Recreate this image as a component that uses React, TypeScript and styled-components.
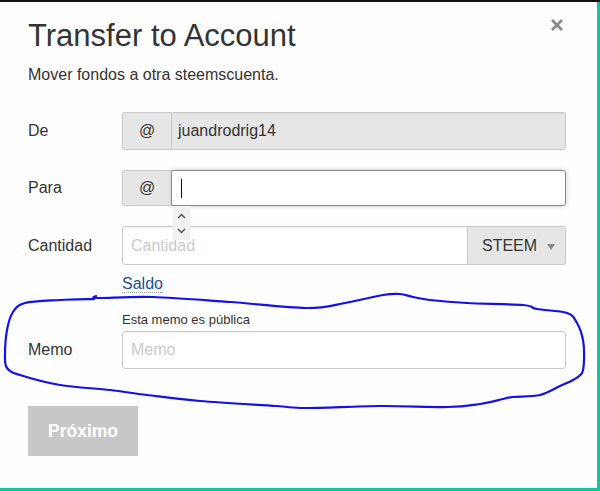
import React from "react";
import styled, { createGlobalStyle } from "styled-components";

const GlobalStyle = createGlobalStyle`
  html, body {
    margin: 0;
    padding: 0;
    background: #17c29d;
  }
  body {
    font-family: "Liberation Sans", Arial, Helvetica, sans-serif;
    color: #333;
  }
`;

const Frame = styled.div`
  position: relative;
  width: 600px;
  height: 491px;
  background: #17c29d;
  overflow: hidden;
`;

const TopRule = styled.div`
  height: 2px;
  background: #111;
`;

const Modal = styled.div`
  position: relative;
  width: 597px;
  height: 486px;
  box-sizing: border-box;
  padding: 16px 31px 0 28px;
  background: #fefefe;
`;

const Title = styled.h2`
  margin: 0;
  font-size: 31px;
  line-height: 36px;
  font-weight: 400;
  color: #333;
`;

const Subtitle = styled.p`
  margin: 11px 0 0;
  font-size: 16px;
  line-height: 20px;
  color: #333;
`;

const CloseButton = styled.button`
  position: absolute;
  top: 16px;
  right: 33px;
  width: 14px;
  height: 14px;
  padding: 0;
  border: 0;
  background: transparent;
  display: flex;
`;

const Form = styled.div`
  margin-top: 27px;
  display: flex;
  flex-direction: column;
`;

const Row = styled.div<{ $top?: number; $align?: string }>`
  display: grid;
  grid-template-columns: 94px 1fr;
  align-items: ${(p) => p.$align ?? "end"};
  margin-top: ${(p) => p.$top ?? 0}px;
`;

const Label = styled.div<{ $h: number }>`
  font-size: 16px;
  line-height: ${(p) => p.$h}px;
  color: #333;
`;

const Field = styled.div`
  display: flex;
  flex-direction: column;
`;

const Group = styled.div<{ $h: number }>`
  position: relative;
  display: flex;
  height: ${(p) => p.$h}px;
`;

const Prefix = styled.div`
  width: 49px;
  box-sizing: border-box;
  display: flex;
  align-items: center;
  justify-content: center;
  background: #e6e6e6;
  border: 1px solid #cacaca;
  border-right: 0;
  border-radius: 3px 0 0 3px;
  font-size: 16px;
  color: #333;
`;

const Input = styled.div<{ $disabled?: boolean; $focus?: boolean; $round?: string }>`
  flex: 1;
  box-sizing: border-box;
  display: flex;
  align-items: center;
  padding-left: ${(p) => (p.$disabled ? 6 : 8)}px;
  background: ${(p) => (p.$disabled ? "#e6e6e6" : "#fff")};
  border: 1px solid ${(p) => (p.$focus ? "#8a8a8a" : "#cacaca")};
  border-radius: ${(p) => p.$round ?? "0 3px 3px 0"};
  box-shadow: ${(p) => (p.$focus ? "0 0 5px #cacaca" : "inset 0 1px 2px rgba(10,10,10,0.06)")};
  font-size: 16px;
  color: #333;
`;

const Placeholder = styled.span`
  color: #cacaca;
`;

const Caret = styled.span`
  display: block;
  width: 1px;
  height: 19px;
  margin-left: 1px;
  background: #111;
`;

const Select = styled.div`
  width: 98px;
  box-sizing: border-box;
  display: flex;
  align-items: center;
  justify-content: space-between;
  padding: 0 10px 0 14px;
  background: #e6e6e6;
  border: 1px solid #cacaca;
  border-left: 0;
  border-radius: 0 3px 3px 0;
  font-size: 16px;
  color: #333;
`;

const Arrow = styled.span`
  width: 0;
  height: 0;
  border-left: 4px solid transparent;
  border-right: 4px solid transparent;
  border-top: 6px solid #8a8a8a;
  margin-top: 2px;
`;

const Spinner = styled.div`
  position: absolute;
  z-index: 2;
  left: 51px;
  top: 100%;
  width: 17px;
  height: 34px;
  background: #f1f1f1;
  display: flex;
  flex-direction: column;
  align-items: center;
  justify-content: space-around;
  padding: 2px 0;
  box-sizing: border-box;
`;

const Balance = styled.div`
  margin-top: 9px;
  font-size: 16px;
  line-height: 20px;
`;

const Link = styled.a`
  color: #1a4f95;
  text-decoration: none;
  border-bottom: 1px dotted #9a9a9a;
`;

const Hint = styled.div`
  margin-top: 18px;
  margin-bottom: 3px;
  font-size: 13px;
  line-height: 16px;
  color: #333;
`;

const Submit = styled.button`
  margin-top: 37px;
  width: 110px;
  height: 50px;
  border: 0;
  background: #c6c7c9;
  color: #fff;
  font-family: "Liberation Sans", Arial, sans-serif;
  font-size: 17.5px;
  font-weight: 700;
  padding: 0;
`;

const Annotation = styled.svg`
  position: absolute;
  left: 0;
  top: 0;
  z-index: 3;
  pointer-events: none;
`;

const loop: [number, number][] = [
  [94, 299], [96, 296], [98, 298], [153, 297], [230, 302], [306, 308], [345, 303],
  [383, 295], [400, 294], [413, 297], [430, 300], [467, 303], [523, 305],
  [537, 309], [567, 313], [577, 323], [583, 340], [584, 360], [582, 373],
  [573, 380], [560, 386], [540, 395], [513, 397], [503, 399], [480, 404],
  [447, 407], [380, 406], [306, 408], [276, 406], [200, 401], [147, 395],
  [110, 390], [60, 385], [20, 375], [7, 368], [5, 355], [7, 330], [13, 312],
  [25, 303], [60, 300], [94, 299],
];

function smoothPath(pts: [number, number][]) {
  let d = `M ${pts[0][0]} ${pts[0][1]}`;
  for (let i = 0; i < pts.length - 1; i++) {
    const p0 = pts[i - 1] ?? pts[i];
    const p1 = pts[i];
    const p2 = pts[i + 1];
    const p3 = pts[i + 2] ?? p2;
    const c1x = p1[0] + (p2[0] - p0[0]) / 6;
    const c1y = p1[1] + (p2[1] - p0[1]) / 6;
    const c2x = p2[0] - (p3[0] - p1[0]) / 6;
    const c2y = p2[1] - (p3[1] - p1[1]) / 6;
    d += ` C ${c1x.toFixed(1)} ${c1y.toFixed(1)} ${c2x.toFixed(1)} ${c2y.toFixed(1)} ${p2[0]} ${p2[1]}`;
  }
  return d;
}

export default function App() {
  return (
    <>
      <GlobalStyle />
      <Frame>
        <TopRule />
        <Modal>
          <Title>Transfer to Account</Title>
          <Subtitle>Mover fondos a otra steemscuenta.</Subtitle>
          <CloseButton aria-label="close">
            <svg width="14" height="14" viewBox="0 0 14 14">
              <path d="M2 2 L12 12 M12 2 L2 12" stroke="#8a8a8a" strokeWidth="2.8" />
            </svg>
          </CloseButton>

          <Form>
            <Row>
              <Label $h={38}>De</Label>
              <Group $h={38}>
                <Prefix>@</Prefix>
                <Input $disabled>juandrodrig14</Input>
              </Group>
            </Row>

            <Row $top={20}>
              <Label $h={36}>Para</Label>
              <Group $h={36}>
                <Prefix>@</Prefix>
                <Input $focus>
                  <Caret />
                </Input>
                <Spinner>
                  <svg width="9" height="6" viewBox="0 0 9 6">
                    <path d="M1 5 L4.5 1.5 L8 5" fill="none" stroke="#555" strokeWidth="1.5" />
                  </svg>
                  <svg width="9" height="6" viewBox="0 0 9 6">
                    <path d="M1 1 L4.5 4.5 L8 1" fill="none" stroke="#555" strokeWidth="1.5" />
                  </svg>
                </Spinner>
              </Group>
            </Row>

            <Row $top={20} $align="start">
              <Label $h={39}>Cantidad</Label>
              <Field>
                <Group $h={39}>
                  <Input $round="3px 0 0 3px">
                    <Placeholder>Cantidad</Placeholder>
                  </Input>
                  <Select>
                    STEEM
                    <Arrow />
                  </Select>
                </Group>
                <Balance>
                  <Link>Saldo</Link>
                </Balance>
              </Field>
            </Row>

            <Row>
              <Label $h={38}>Memo</Label>
              <Field>
                <Hint>Esta memo es pública</Hint>
                <Group $h={38}>
                  <Input $round="3px">
                    <Placeholder>Memo</Placeholder>
                  </Input>
                </Group>
              </Field>
            </Row>

            <div>
              <Submit>Próximo</Submit>
            </div>
          </Form>
        </Modal>
        <Annotation width="600" height="491" viewBox="0 0 600 491">
          <path d={smoothPath(loop)} fill="none" stroke="#1212e8" strokeWidth="2.2" strokeLinejoin="round" strokeLinecap="round" />
        </Annotation>
      </Frame>
    </>
  );
}
